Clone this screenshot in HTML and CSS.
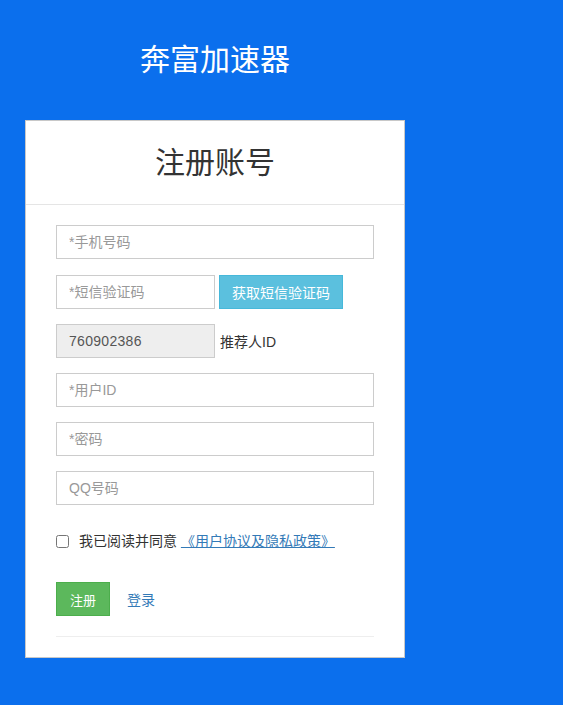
FILE: index.html
```html
<!DOCTYPE html>
<html lang="zh-CN">
<head>
<meta charset="utf-8">
<title>奔富加速器 - 注册账号</title>
<link rel="stylesheet" href="styles.css">
</head>
<body>
<div class="wrap">
  <h1 class="brand">奔富加速器</h1>
  <div class="card">
    <div class="card-head">注册账号</div>
    <form class="card-body">
      <input class="field" type="text" placeholder="*手机号码">
      <div class="row">
        <input class="field short" type="text" placeholder="*短信验证码">
        <button type="button" class="btn btn-info">获取短信验证码</button>
      </div>
      <div class="row">
        <input class="field short" type="text" value="760902386" readonly>
        <span class="hint">推荐人ID</span>
      </div>
      <input class="field" type="text" placeholder="*用户ID">
      <input class="field" type="password" placeholder="*密码">
      <input class="field" type="text" placeholder="QQ号码">
      <label class="agree">
        <input type="checkbox" class="check">
        <span>我已阅读并同意 <a href="#" class="link">《用户协议及隐私政策》</a></span>
      </label>
      <div class="actions">
        <button type="button" class="btn btn-success">注册</button>
        <a href="#" class="login">登录</a>
      </div>
      <div class="rule"></div>
    </form>
  </div>
</div>
</body>
</html>
```
FILE: styles.css
```css
html, body {
  margin: 0;
  padding: 0;
}

body {
  background: #0b6fed;
  font-family: "Liberation Sans", "Noto Sans CJK SC", sans-serif;
  font-size: 14px;
  color: #333;
  min-height: 705px;
}

.wrap {
  width: 380px;
  margin-left: 25px;
}

.brand {
  margin: 0;
  padding-top: 39px;
  height: 120px;
  box-sizing: border-box;
  text-align: center;
  color: #fff;
  font-weight: normal;
  font-size: 30px;
  line-height: 42px;
}

.card {
  background: #fff;
  border: 1px solid #c8c8c8;
}

.card-head {
  height: 83px;
  line-height: 83px;
  text-align: center;
  font-size: 30px;
  color: #333;
  border-bottom: 1px solid #e5e5e5;
}

.card-body {
  padding: 20px 30px 20px;
  display: flex;
  flex-direction: column;
  margin: 0;
}

.field {
  display: block;
  box-sizing: border-box;
  width: 318px;
  height: 34px;
  margin: 0 0 15px;
  padding: 6px 12px;
  border: 1px solid #ccc;
  border-radius: 0;
  background: #fff;
  font-family: inherit;
  font-size: 14px;
  color: #555;
  outline: none;
}

.field::placeholder {
  color: #999;
}

.field[readonly] {
  background: #eee;
  letter-spacing: 0.3px;
}

.row {
  display: flex;
  align-items: center;
  gap: 5px;
  margin-bottom: 15px;
}

.row .field {
  margin: 0;
}

.field.short {
  width: 159px;
}

.hint {
  font-size: 14px;
  color: #333;
}

.btn {
  box-sizing: border-box;
  height: 34px;
  padding: 6px 12px;
  border: 1px solid transparent;
  border-radius: 0;
  font-family: inherit;
  font-size: 14px;
  color: #fff;
  cursor: pointer;
}

.btn-info {
  width: 124px;
  padding: 6px 0;
  margin-top: 1px;
  margin-left: -1px;
  background: #5bc0de;
  border-color: #46b8da;
}

.btn-success {
  width: 54px;
  padding: 6px 0;
  background: #5cb85c;
  border-color: #4cae4c;
  font-size: 13px;
}

.agree {
  display: flex;
  align-items: center;
  gap: 10px;
  margin-top: 11px;
  height: 20px;
  line-height: 20px;
  font-size: 14px;
  color: #333;
}

.check {
  width: 13px;
  height: 13px;
  margin: 0;
}

.link {
  color: #337ab7;
  text-decoration: underline;
}

.actions {
  display: flex;
  align-items: center;
  gap: 17px;
  margin-top: 31px;
}

.login {
  color: #337ab7;
  text-decoration: none;
  font-size: 14px;
}

.rule {
  margin-top: 20px;
  height: 1px;
  background: #eee;
}
```
